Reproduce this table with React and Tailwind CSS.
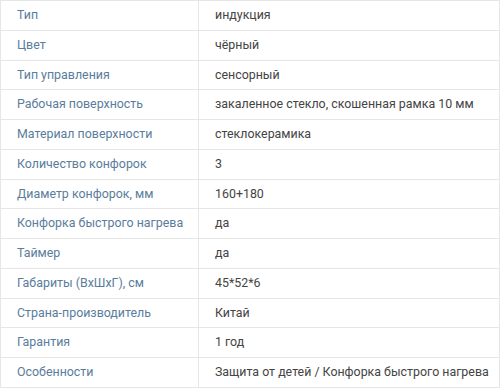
const rows = [
  ['Тип', 'индукция'],
  ['Цвет', 'чёрный'],
  ['Тип управления', 'сенсорный'],
  ['Рабочая поверхность', 'закаленное стекло, скошенная рамка 10 мм'],
  ['Материал поверхности', 'стеклокерамика'],
  ['Количество конфорок', '3'],
  ['Диаметр конфорок, мм', '160+180'],
  ['Конфорка быстрого нагрева', 'да'],
  ['Таймер', 'да'],
  ['Габариты (ВхШхГ), см', '45*52*6'],
  ['Страна-производитель', 'Китай'],
  ['Гарантия', '1 год'],
  ['Особенности', 'Защита от детей / Конфорка быстрого нагрева'],
]

export default function App() {
  return (
    <div className="w-[500px] bg-white font-['Roboto',sans-serif] text-[12.4px]">
      <table className="w-full border-collapse">
        <tbody>
          {rows.map(([name, value]) => (
            <tr key={name} className="h-[29.75px] border border-[#e6e6e6]">
              <td className="w-[198px] border-r border-[#e6e6e6] pl-4 text-[#5a7d9c] align-middle whitespace-nowrap">
                {name}
              </td>
              <td className="pl-4 text-[#444] align-middle whitespace-nowrap">{value}</td>
            </tr>
          ))}
        </tbody>
      </table>
    </div>
  )
}
